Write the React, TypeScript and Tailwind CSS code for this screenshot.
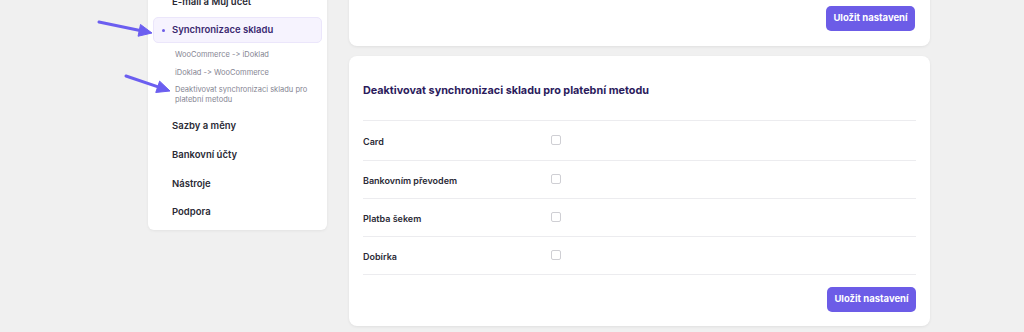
const font = { fontFamily: "Inter, 'Noto Sans', sans-serif" };

const subItems = [
  "WooCommerce -> iDoklad",
  "iDoklad -> WooCommerce",
  "Deaktivovat synchronizaci skladu pro platební metodu",
];

const menuItems = ["Sazby a měny", "Bankovní účty", "Nástroje", "Podpora"];

const methods = ["Card", "Bankovním převodem", "Platba šekem", "Dobírka"];

function SaveButton() {
  return (
    <button className="h-[25px] w-[89px] rounded-[5px] bg-[#6c5ce7] text-[9.5px] font-bold text-white">
      Uložit nastavení
    </button>
  );
}

function Arrow({ x1, y1, x2, y2 }: { x1: number; y1: number; x2: number; y2: number }) {
  const a = Math.atan2(y2 - y1, x2 - x1);
  const l = 13;
  const w = 6;
  const bx = x2 - l * Math.cos(a);
  const by = y2 - l * Math.sin(a);
  const p1 = `${bx + w * Math.sin(a)},${by - w * Math.cos(a)}`;
  const p2 = `${bx - w * Math.sin(a)},${by + w * Math.cos(a)}`;
  return (
    <g>
      <line x1={x1} y1={y1} x2={bx + 2 * Math.cos(a)} y2={by + 2 * Math.sin(a)} stroke="#6b5ef0" strokeWidth={3} strokeLinecap="round" />
      <polygon points={`${x2},${y2} ${p1} ${p2}`} fill="#6b5ef0" stroke="#6b5ef0" strokeWidth={1} strokeLinejoin="round" />
    </g>
  );
}

export default function App() {
  return (
    <div
      className="relative h-[332px] w-[1024px] overflow-hidden bg-[#f0f0f0] [font-feature-settings:'liga'_0,'calt'_0]"
      style={font}
    >
      <div className="flex items-start gap-[22px] pl-[148px]">
        <aside className="-mt-[17px] w-[179px] rounded-[6px] bg-white px-[5px] pb-[3px] pt-[5px] shadow-[0_1px_3px_rgba(0,0,0,0.06)]">
          <div className="flex h-[29px] items-center pl-[19px] text-[9.5px] font-semibold text-[#2a2a35]">
            E-mail a Můj účet
          </div>
          <div className="flex h-[26px] items-center gap-[7px] rounded-[5px] border border-[#ebe6fb] bg-[#f6f3fe] pl-[8px] text-[9.5px] font-semibold text-[#3a2870]">
            <span className="h-[3px] w-[3px] rounded-full bg-[#6c5ce7]" />
            Synchronizace skladu
          </div>
          <ul className="flex flex-col gap-[8px] pb-[8px] pl-[22px] pr-[12px] pt-[7px] text-[7.5px] leading-[9.5px] text-[#858592]">
            {subItems.map((s) => (
              <li key={s}>{s}</li>
            ))}
          </ul>
          {menuItems.map((m) => (
            <div key={m} className="flex h-[28.7px] items-center pl-[19px] text-[9.5px] font-semibold text-[#2a2a35]">
              {m}
            </div>
          ))}
        </aside>

        <main className="-mt-[30px] flex w-[581px] flex-col gap-[10px]">
          <section className="flex justify-end rounded-[8px] bg-white px-[15px] pb-[15px] pt-[36px] shadow-[0_1px_3px_rgba(0,0,0,0.07)]">
            <SaveButton />
          </section>

          <section className="rounded-[8px] bg-white px-[14px] pb-[14px] pt-[28px] shadow-[0_1px_3px_rgba(0,0,0,0.07)]">
            <h2 className="mb-[22px] text-[10.8px] font-bold leading-[14px] text-[#2b1b5c]">
              Deaktivovat synchronizaci skladu pro platební metodu
            </h2>
            <div className="border-t border-[#ececef]">
              {methods.map((m, i) => (
                <div
                  key={m}
                  className={`flex items-center border-b border-[#ececef] ${i === 0 ? "h-[40px]" : "h-[38px]"}`}
                >
                  <span className="mt-[3px] w-[188px] text-[9px] font-semibold text-[#2a2a35]">{m}</span>
                  <span className="-mt-[2px] h-[10px] w-[10px] rounded-[2px] border border-[#cfcfd4] bg-white" />
                </div>
              ))}
            </div>
            <div className="mt-[12px] flex justify-end">
              <SaveButton />
            </div>
          </section>
        </main>
      </div>

      <svg className="pointer-events-none absolute left-0 top-0" width={1024} height={332}>
        <Arrow x1={99} y1={22} x2={152} y2={33} />
        <Arrow x1={126} y1={76} x2={170} y2={91} />
      </svg>
    </div>
  );
}
